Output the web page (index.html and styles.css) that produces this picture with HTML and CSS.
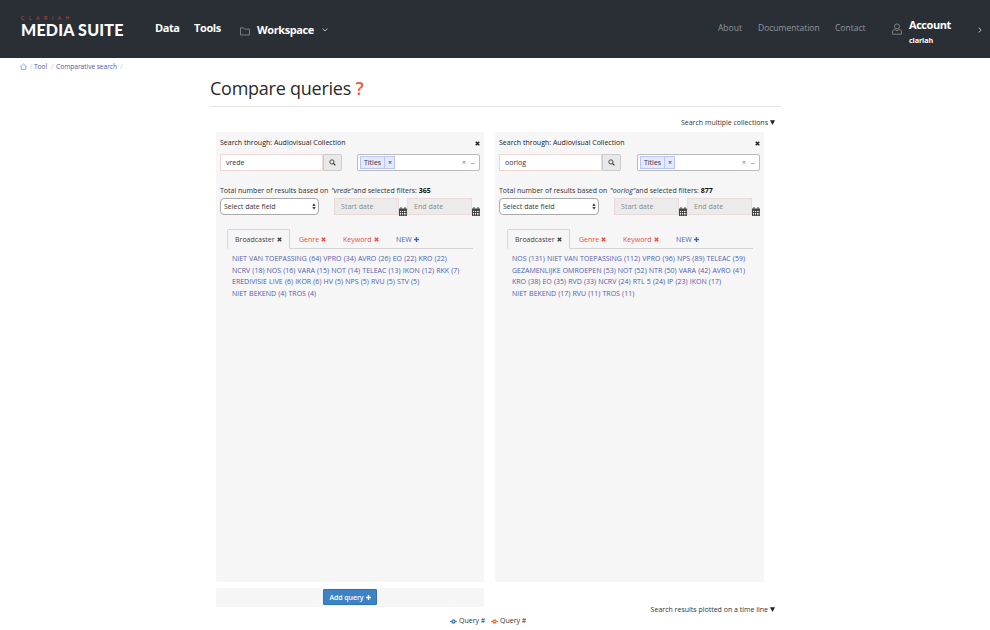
FILE: index.html
```html
<!DOCTYPE html>
<html lang="en">
<head>
<meta charset="utf-8">
<title>Compare queries</title>
<link rel="stylesheet" href="styles.css">
</head>
<body>
<svg class="defs" width="0" height="0">
  <symbol id="x" viewBox="0 0 10 10"><path d="M1.5 1.5 8.5 8.5M8.5 1.5 1.5 8.5" fill="none" stroke="currentColor" stroke-width="3"/></symbol>
  <symbol id="plus" viewBox="0 0 10 10"><path d="M5 0V10M0 5H10" fill="none" stroke="currentColor" stroke-width="2.8"/></symbol>
  <symbol id="glass" viewBox="0 0 12 12"><circle cx="5" cy="5" r="3.6" fill="none" stroke="currentColor" stroke-width="1.5"/><path d="M7.6 7.6 11 11" stroke="currentColor" stroke-width="2"/></symbol>
  <symbol id="cal" viewBox="0 0 8 9"><path d="M0 1.5H8V9H0Z" fill="#444"/><path d="M2 0V2M6 0V2" stroke="#444"/><path d="M1 4H2V5H1ZM3 4H4V5H3ZM5 4H6V5H5ZM1 6H2V7H1ZM3 6H4V7H3ZM5 6H6V7H5ZM6.5 4H7.3V5H6.5ZM6.5 6H7.3V7H6.5ZM1 7.6H2V8.3H1ZM3 7.6H4V8.3H3ZM5 7.6H6V8.3H5ZM6.5 7.6H7.3V8.3H6.5Z" fill="#fff"/></symbol>
  <symbol id="sort" viewBox="0 0 4 7"><path d="M.3 3 2 .3 3.7 3ZM.3 4 2 6.7 3.7 4Z" fill="#444"/></symbol>
  <symbol id="down" viewBox="0 0 6 6"><path d="M0 .3H6L3 6Z" fill="#222"/></symbol>
</svg>
<header class="bar">
  <div class="logo"><span class="brand">CLARIAH</span><span class="suite">MEDIA SUITE</span></div>
  <nav class="main-nav">
    <span class="data">Data</span><span class="tools">Tools</span>
    <svg class="folder" viewBox="0 0 10 9"><path d="M.5 8V.9H3.6L4.6 2.1H9.5V8Z" fill="none" stroke="#8a8583" stroke-width=".9"/></svg>
    <span class="workspace">Workspace</span>
    <svg class="chev" viewBox="0 0 6 4"><path d="M.5.6 3 3 5.5.6" fill="none" stroke="#ccc" stroke-width=".9"/></svg>
  </nav>
  <nav class="side-nav"><span class="about">About</span><span class="docs">Documentation</span><span class="contact">Contact</span></nav>
  <svg class="user" viewBox="0 0 10 12"><circle cx="5" cy="3.4" r="2.5" fill="none" stroke="#8a8583" stroke-width=".9"/><path d="M3.2 6.6H2.4Q.6 6.8.6 9V11.2H9.4V9Q9.4 6.8 7.6 6.6H6.8L5 7.8Z" fill="none" stroke="#8a8583" stroke-width=".9"/></svg>
  <div class="account"><span class="acct">Account</span><span class="uname">clariah</span></div>
  <svg class="next" viewBox="0 0 4 6"><path d="M.6.5 3.2 3 .6 5.5" fill="none" stroke="#ccc" stroke-width=".9"/></svg>
</header>
<div class="crumbs">
  <svg class="home" viewBox="0 0 7 7"><path d="M.3 4 3.5.7 6.7 4M1.3 3.4V6.5H5.7V3.4" fill="none" stroke="#6b8fc4" stroke-width=".7"/></svg>
  <i>/</i><span class="c1">Tool</span><i>/</i><span class="c2">Comparative search</span><i>/</i>
</div>
<main class="page">
  <h1><span class="h-text">Compare queries</span> <b>?</b></h1>
  <div class="multi"><span>Search multiple collections</span><svg class="tri"><use href="#down"/></svg></div>
  <div class="panels">
    <section class="panel">
      <div class="head"><span class="through">Search through: Audiovisual Collection</span><svg class="x"><use href="#x"/></svg></div>
      <div class="search"><div class="query">vrede</div><div class="go"><svg><use href="#glass"/></svg></div>
        <div class="pick"><span class="tag"><span class="tag-text">Titles</span><span class="tag-x">×</span></span><span class="clear">×</span><span class="caret"></span></div></div>
      <div class="total"><span>Total number of results based on&nbsp; <em>"vrede"</em>and selected filters: <b>365</b></span></div>
      <div class="dates"><div class="field"><span>Select date field</span><svg><use href="#sort"/></svg></div><div class="date">Start date</div><svg class="cal"><use href="#cal"/></svg><div class="date">End date</div><svg class="cal"><use href="#cal"/></svg></div>
      <div class="tabs"><div class="tab on"><span>Broadcaster</span><svg><use href="#x"/></svg></div><div class="tab genre"><span>Genre</span><svg><use href="#x"/></svg></div><div class="tab keyword"><span>Keyword</span><svg><use href="#x"/></svg></div><div class="tab new"><span>NEW</span><svg><use href="#plus"/></svg></div></div>
      <div class="facets">
        <div>NIET VAN TOEPASSING (64) VPRO (34) AVRO (26) EO (22) KRO (22)</div>
        <div>NCRV (18) NOS (16) VARA (15) NOT (14) TELEAC (13) IKON (12) RKK (7)</div>
        <div>EREDIVISIE LIVE (6) IKOR (6) HV (5) NPS (5) RVU (5) STV (5)</div>
        <div>NIET BEKEND (4) TROS (4)</div>
      </div>
    </section>
    <section class="panel second">
      <div class="head"><span class="through">Search through: Audiovisual Collection</span><svg class="x"><use href="#x"/></svg></div>
      <div class="search"><div class="query">oorlog</div><div class="go"><svg><use href="#glass"/></svg></div>
        <div class="pick"><span class="tag"><span class="tag-text">Titles</span><span class="tag-x">×</span></span><span class="clear">×</span><span class="caret"></span></div></div>
      <div class="total"><span>Total number of results based on&nbsp; <em>"oorlog"</em>and selected filters: <b>877</b></span></div>
      <div class="dates"><div class="field"><span>Select date field</span><svg><use href="#sort"/></svg></div><div class="date">Start date</div><svg class="cal"><use href="#cal"/></svg><div class="date">End date</div><svg class="cal"><use href="#cal"/></svg></div>
      <div class="tabs"><div class="tab on"><span>Broadcaster</span><svg><use href="#x"/></svg></div><div class="tab genre"><span>Genre</span><svg><use href="#x"/></svg></div><div class="tab keyword"><span>Keyword</span><svg><use href="#x"/></svg></div><div class="tab new"><span>NEW</span><svg><use href="#plus"/></svg></div></div>
      <div class="facets">
        <div>NOS (131) NIET VAN TOEPASSING (112) VPRO (96) NPS (89) TELEAC (59)</div>
        <div>GEZAMENLIJKE OMROEPEN (53) NOT (52) NTR (50) VARA (42) AVRO (41)</div>
        <div>KRO (38) EO (35) RVD (33) NCRV (24) RTL 5 (24) IP (23) IKON (17)</div>
        <div>NIET BEKEND (17) RVU (11) TROS (11)</div>
      </div>
    </section>
  </div>
  <div class="add"><div class="add-btn"><span>Add query</span><svg><use href="#plus"/></svg></div></div>
  <div class="multi plotted"><span>Search results plotted on a time line</span><svg class="tri"><use href="#down"/></svg></div>
  <div class="legend">
    <svg class="blue" viewBox="0 0 7 5"><path d="M0 2.5H7" stroke="currentColor"/><circle cx="3.5" cy="2.5" r="1.5" fill="#fff" stroke="currentColor" stroke-width="1.4"/></svg><span>Query #</span>
    <svg class="orange" viewBox="0 0 7 5"><path d="M0 2.5H7" stroke="currentColor"/><circle cx="3.5" cy="2.5" r="1.5" fill="#fff" stroke="currentColor" stroke-width="1.4"/></svg><span>Query #</span>
  </div>
</main>
</body>
</html>
```
FILE: styles.css
```css
* { box-sizing: border-box; }
body { margin: 0; width: 990px; height: 630px; overflow: hidden; background: #fff; font: 7px/12px "Open Sans", sans-serif; color: #333; white-space: nowrap; }
svg { display: block; flex: none; }
.defs { display: none; }
.bar { height: 58px; background: #2a2e35; display: flex; align-items: flex-start; color: #fff; }
.logo { width: 155px; padding: 16px 0 0 21px; display: flex; flex-direction: column; }
.brand { font: 4.6px/5px "Liberation Sans", sans-serif; letter-spacing: 4.7px; color: #c04c40; }
.suite { font: 900 16px/17px Lato, sans-serif; letter-spacing: .2px; }
.main-nav { display: flex; width: 563px; font: 700 11px/14px "Open Sans", sans-serif; letter-spacing: -.4px; padding-top: 21px; }
.data { width: 39px; }
.tools { width: 46px; }
.folder { width: 10px; height: 9px; margin-top: 6px; }
.workspace { margin: 2px 0 0 7px; width: 65px; }
.chev { width: 6px; height: 4px; margin-top: 7px; }
.side-nav { display: flex; width: 174px; padding-top: 22px; font-size: 8.5px; color: #8c99a3; }
.about { width: 40px; }
.docs { width: 77px; }
.user { width: 10px; height: 12px; margin: 23px 7px 0 0; }
.account { width: 69px; padding-top: 18px; display: flex; flex-direction: column; font-weight: 700; }
.acct { font-size: 11px; line-height: 14px; letter-spacing: -.45px; }
.uname { font-size: 7.2px; line-height: 16px; letter-spacing: -.1px; }
.next { width: 4px; height: 6px; margin-top: 27px; }
.crumbs { height: 17px; padding: 3px 0 0 20px; display: flex; font-size: 6.7px; color: #5658a8; }
.home { width: 7px; height: 7px; margin-top: 2px; }
.crumbs i { font-style: normal; color: #c9c9c9; width: 2px; margin: 0 2px 0 3px; }
.c1 { margin-right: 1px; letter-spacing: -.08px; }
.c2 { margin-left: 1px; letter-spacing: -.08px; }
.page { width: 571px; margin-left: 210px; }
h1 { margin: 0; height: 32px; border-bottom: 1px solid #e5e5e5; font: 500 18px/26px "Open Sans", sans-serif; letter-spacing: -.25px; color: #2a2a2a; }
h1 b { color: #f0594a; font-weight: 600; }
.multi { height: 25px; padding: 10px 6px 0 0; display: flex; justify-content: flex-end; }
.tri { width: 5px; height: 5px; margin: 3px 0 0 2px; }
.panels { display: flex; gap: 11px; padding-left: 6px; }
.panel { width: 268px; height: 450px; background: #f6f6f6; border-radius: 2px; padding: 5px 4px 0; }
.panel.second { width: 269px; }
.head { display: flex; justify-content: space-between; align-items: center; height: 12px; color: #222; }
.x { width: 5px; height: 5px; }
.search { display: flex; margin-top: 5px; height: 17px; }
.query { width: 103px; border: 1px solid #f0d8d5; background: #fff; padding-left: 5px; line-height: 15px; }
.go { width: 19px; background: #e9e9e9; border: 1px solid #ccc; padding: 4px 5px; border-radius: 0 2px 2px 0; }
.go svg { width: 7px; height: 7px; }
.pick { width: 123px; margin-left: 15px; border: 1px solid #bbb; border-radius: 2px; background: #fff; display: flex; padding: 1px 4px 0 2px; }
.second .pick { margin-left: 16px; }
.tag { display: flex; width: 35px; height: 13px; line-height: 11px; background: #e5eaff; border: 1px solid #b9c6fb; color: #334; }
.tag-text { width: 24px; padding-left: 3px; border-right: 1px solid #b9c6fb; }
.tag-x { padding-left: 3px; }
.clear { margin: 1px 5px 0 auto; color: #777; }
.caret { width: 4px; height: 1px; background: #bbb; margin-top: 7px; }
.total { margin-top: 14px; height: 12px; }
.total b { color: #111; }
.total em { margin-left: -.8px; }
.dates { display: flex; margin-top: 1px; height: 17px; }
.field { width: 99px; margin-right: 15px; border: 1px solid #aaa; border-radius: 4px; background: #fff; display: flex; justify-content: space-between; padding: 0 2px 0 3px; line-height: 15px; }
.second .field { width: 100px; }
.field svg { width: 4px; height: 7px; margin-top: 4px; }
.date { width: 65px; border: 1px solid #eadad8; background: #ebebeb; line-height: 15px; padding-left: 6px; color: #888; letter-spacing: .05px; }
.cal { width: 8px; height: 9px; margin-top: 9px; }
.tabs { display: flex; width: 246px; height: 20px; margin: 14px 0 0 7px; border-bottom: 1px solid #d5d5d5; line-height: 20px; }
.second .tabs { margin-left: 8px; }
.tab { display: flex; align-items: center; height: 20px; padding-top: 1px; color: #f04e45; }
.tab svg { width: 5px; height: 5px; margin-left: 2px; }
.tab.on { width: 63px; border: 1px solid #d5d5d5; border-bottom-color: #f6f6f6; border-radius: 2px 2px 0 0; color: #444; padding-left: 7px; }
.genre { width: 53px; padding-left: 9px; }
.keyword { width: 53px; }
.tab.new { color: #4563b4; }
.facets { margin: 4px 0 0 12px; color: #5060ad; line-height: 11.6px; word-spacing: .32px; }
.second .facets { margin-left: 13px; }
.add { width: 268px; height: 19px; margin: 6px 0 0 6px; padding-top: 1px; background: #f6f6f6; border-radius: 2px; display: flex; justify-content: center; }
.add-btn { width: 54px; height: 16px; background: #3f81c5; border: 1px solid #3072b5; border-radius: 1px; display: flex; align-items: center; justify-content: center; color: #fff; font-weight: 600; letter-spacing: -.08px; }
.add-btn span { padding-top: 1px; }
.add-btn svg { width: 5px; height: 5px; margin-left: 2px; }
.plotted { height: 8px; padding-top: 0; margin-top: -3px; }
.legend { display: flex; margin: 3px 0 0 240px; line-height: 12px; }
.legend svg { width: 7px; height: 5px; margin: 4px 2px 0 0; }
.legend span { width: 32px; }
.blue { color: #3c7cc4; }
.orange { color: #f4741f; }
```
